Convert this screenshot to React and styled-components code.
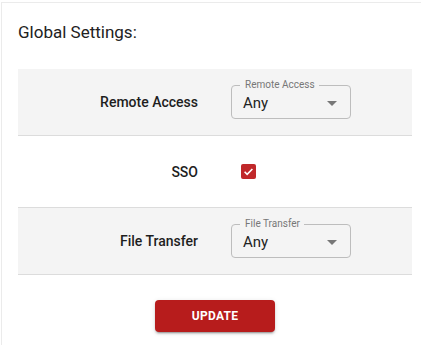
import React from "react";
import styled, { createGlobalStyle } from "styled-components";

const GlobalStyle = createGlobalStyle`
  body {
    margin: 0;
    background: #fff;
    overflow: hidden;
    font-family: Roboto, "Liberation Sans", sans-serif;
  }
`;

const Card = styled.div`
  margin: 2px 0 0 1px;
  width: 428px;
  min-height: 360px;
  box-sizing: border-box;
  border: 1px solid #ebebeb;
  padding: 0 16px;
`;

const Header = styled.div`
  height: 66px;
  padding-top: 17px;
  box-sizing: border-box;
  font-size: 17px;
  line-height: 24px;
  font-weight: 400;
  color: #222;
`;

const Row = styled.div`
  display: grid;
  grid-template-columns: 1fr 1fr;
  align-items: center;
  height: ${(p) => p.h}px;
  background: ${(p) => (p.shaded ? "#f4f4f4" : "#fff")};
  border-bottom: 1px solid #dcdcdc;
`;

const Label = styled.div`
  text-align: right;
  padding-right: 17px;
  font-size: 14px;
  font-weight: 500;
  color: #1e1e1e;
`;

const Control = styled.div`
  padding-left: 16px;
  display: flex;
  align-items: center;
`;

const SelectBox = styled.div`
  position: relative;
  width: 120px;
  height: 34px;
  box-sizing: border-box;
  border: 1px solid #bdbdbd;
  border-radius: 4px;
  display: flex;
  align-items: center;
  justify-content: space-between;
  padding: 2px 13px 0 11px;
  font-size: 15px;
  color: #222;
`;

const Legend = styled.span`
  position: absolute;
  top: -7px;
  left: 8px;
  padding: 0 4px 0 5px;
  font-size: 10px;
  line-height: 12px;
  color: #777;
  background: ${(p) => p.bg};
`;

const Arrow = styled.span`
  width: 0;
  height: 0;
  border-left: 5px solid transparent;
  border-right: 5px solid transparent;
  border-top: 5px solid #777;
`;

const Check = styled.span`
  margin-left: 10px;
  width: 15px;
  height: 15px;
  border-radius: 2px;
  background: #c0282a;
  display: flex;
  align-items: center;
  justify-content: center;
`;

const Footer = styled.div`
  display: flex;
  justify-content: center;
  padding-top: 25px;
`;

const Button = styled.button`
  width: 120px;
  height: 32px;
  border: none;
  border-radius: 4px;
  background: #b71c1c;
  color: #fff;
  font-family: Roboto, "Liberation Sans", sans-serif;
  font-size: 12px;
  font-weight: 700;
  letter-spacing: 0.3px;
  box-shadow: 0 3px 1px -2px rgba(0,0,0,0.2), 0 2px 2px 0 rgba(0,0,0,0.14), 0 1px 5px 0 rgba(0,0,0,0.12);
`;

const Select = ({ label, value, bg }) => (
  <SelectBox>
    <Legend bg={bg}>{label}</Legend>
    <span>{value}</span>
    <Arrow />
  </SelectBox>
);

const App = () => (
  <>
    <GlobalStyle />
    <Card>
      <Header>Global Settings:</Header>
      <Row shaded h={66}>
        <Label>Remote Access</Label>
        <Control>
          <Select label="Remote Access" value="Any" bg="#f4f4f4" />
        </Control>
      </Row>
      <Row h={71}>
        <Label>SSO</Label>
        <Control>
          <Check>
            <svg width="11" height="11" viewBox="0 0 24 24">
              <path d="M3.5 12.5l5.5 5.5L20.5 6.5" fill="none" stroke="#fff" strokeWidth="3.6" />
            </svg>
          </Check>
        </Control>
      </Row>
      <Row shaded h={66}>
        <Label>File Transfer</Label>
        <Control>
          <Select label="File Transfer" value="Any" bg="#f4f4f4" />
        </Control>
      </Row>
      <Footer>
        <Button>UPDATE</Button>
      </Footer>
    </Card>
  </>
);

export default App;
